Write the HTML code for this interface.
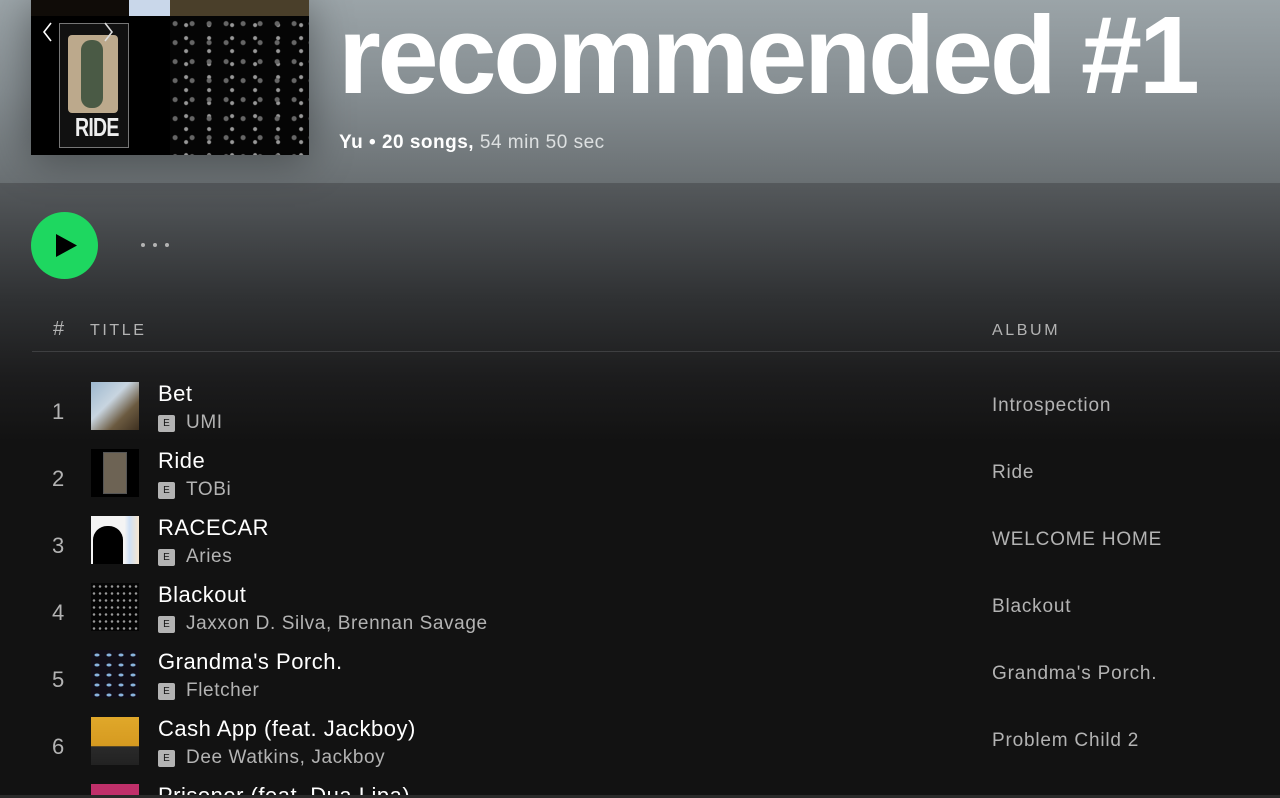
<!DOCTYPE html>
<html style="width:1280px;height:798px;overflow:hidden"><head><meta charset="utf-8"><style>
*{margin:0;padding:0;box-sizing:border-box}
body{width:1280px;height:798px;overflow:hidden;background:#121212;font-family:"Liberation Sans",sans-serif;position:relative}
.hdr{position:absolute;left:0;top:0;width:1280px;height:183px;background:linear-gradient(180deg,#9ba4a8 0%,#858d91 50%,#6a7073 100%)}
.grad{position:absolute;left:0;top:183px;width:1280px;height:260px;background:linear-gradient(180deg,#55595c 0%,#2f3133 45%,#1c1c1d 75%,#121212 100%)}
.art{position:absolute;left:31px;top:0;width:278px;height:155px;background:#000;overflow:hidden;box-shadow:0 4px 40px rgba(0,0,0,.4)}
.t{position:absolute;left:338px;top:-8px;font-size:110px;font-weight:bold;color:#fff;letter-spacing:-3.3px;white-space:nowrap}
.meta{position:absolute;left:339px;top:132px;font-size:19px;color:#fff;font-weight:bold;letter-spacing:.5px}
.meta span{color:#dde0e1;font-weight:normal}
.play{position:absolute;left:31px;top:212px;width:67px;height:67px;border-radius:50%;background:#1ed760}
.dots{position:absolute;left:141px;top:243px}
.dots i{display:inline-block;width:4px;height:4px;border-radius:50%;background:#b3b3b3;margin-right:8px;vertical-align:top}
.th{position:absolute;top:322px;font-size:16px;letter-spacing:2.6px;color:#b3b3b3}
.line{position:absolute;left:32px;top:351px;width:1248px;height:1px;background:#3e3f41}
.row{position:absolute;left:0;width:1280px;height:67px}
.n{position:absolute;left:52px;top:17px;font-size:22px;color:#b3b3b3}
.th2{position:absolute;left:91px;top:0;width:48px;height:48px;overflow:hidden}
.nm{position:absolute;left:158px;top:-1px;font-size:22px;color:#fff;white-space:nowrap;letter-spacing:.5px}
.ar{position:absolute;left:158px;top:30px;font-size:19px;color:#b3b3b3;white-space:nowrap;letter-spacing:.6px}
.e{display:inline-block;width:17px;height:17px;background:#b3b3b3;color:#121212;font-size:10px;text-align:center;line-height:17px;border-radius:2px;margin-right:11px;vertical-align:2px;letter-spacing:0}
.al{position:absolute;left:992px;top:13px;font-size:19px;color:#b3b3b3;white-space:nowrap;letter-spacing:.8px}
</style></head><body>
<div class="hdr"></div><div class="grad"></div>
<div class="art">
<div style="position:absolute;left:0;top:0;width:100px;height:16px;background:#100c08"></div>
<div style="position:absolute;left:98px;top:0;width:41px;height:16px;background:#c9d7ea"></div>
<div style="position:absolute;left:139px;top:0;width:139px;height:16px;background:#4a3f2a"></div>
<div style="position:absolute;left:28px;top:23px;width:70px;height:125px;border:1px solid #777;background:#111"></div>
<div style="position:absolute;left:37px;top:35px;width:50px;height:78px;background:#bca98c;border-radius:4px"></div>
<div style="position:absolute;left:50px;top:40px;width:22px;height:68px;background:#4a5a45;border-radius:10px"></div>
<div style="position:absolute;left:44px;top:112px;font-size:26px;font-weight:bold;color:#eee;letter-spacing:-1px;transform:scaleX(.75);transform-origin:left">RIDE</div>
<div style="position:absolute;left:139px;top:16px;width:139px;height:139px;background:radial-gradient(circle at 30% 40%,#666 0 2px,transparent 3px) 0 0/17px 19px,radial-gradient(circle at 70% 70%,#999 0 1.5px,transparent 2.5px) 0 0/23px 13px,#050505"></div>
<svg style="position:absolute;left:10px;top:20px" width="80" height="24"><path d="M10 3 L3 12 L10 21" stroke="#fff" stroke-width="1.6" fill="none"/><path d="M64 3 L71 12 L64 21" stroke="#ddd" stroke-width="1.6" fill="none"/></svg>
</div>
<div class="t">recommended #1</div>
<div class="meta">Yu • 20 songs, <span>54 min 50 sec</span></div>
<div class="play"><svg width="67" height="67"><path d="M25 22 L46 33.5 L25 45 Z" fill="#000"/></svg></div>
<div class="dots"><i></i><i></i><i></i></div>
<div class="th" style="left:53px;font-size:20px;top:318px">#</div>
<div class="th" style="left:90px">TITLE</div>
<div class="th" style="left:992px">ALBUM</div>
<div class="line"></div>

<div class="row" style="top:382px"><div class="n">1</div><div class="th2" style="background:linear-gradient(135deg,#9db8cf 0%,#c8d5e0 40%,#6b5a40 70%,#3e3020 100%)"></div><div class="nm">Bet</div><div class="ar"><span class="e">E</span>UMI</div><div class="al">Introspection</div></div>
<div class="row" style="top:449px"><div class="n">2</div><div class="th2" style="background:#000"><div style="position:absolute;left:12px;top:3px;width:24px;height:42px;border:1px solid #555;background:#6d6354"></div></div><div class="nm">Ride</div><div class="ar"><span class="e">E</span>TOBi</div><div class="al">Ride</div></div>
<div class="row" style="top:516px"><div class="n">3</div><div class="th2" style="background:linear-gradient(90deg,#f4f4f4 70%,#cfe0f5 80%,#f7e6d0)"><div style="position:absolute;left:2px;top:10px;width:30px;height:38px;background:#000;border-radius:14px 14px 0 0"></div></div><div class="nm">RACECAR</div><div class="ar"><span class="e">E</span>Aries</div><div class="al">WELCOME HOME</div></div>
<div class="row" style="top:583px"><div class="n">4</div><div class="th2" style="background:radial-gradient(circle,#999 0 1px,transparent 1.5px) 0 0/6px 7px,#050505"></div><div class="nm">Blackout</div><div class="ar"><span class="e">E</span>Jaxxon D. Silva, Brennan Savage</div><div class="al">Blackout</div></div>
<div class="row" style="top:650px"><div class="n">5</div><div class="th2" style="background:radial-gradient(ellipse 5px 3px,#8ab4e0 0 2px,transparent 3px) 0 0/12px 10px,#120e18"></div><div class="nm">Grandma's Porch.</div><div class="ar"><span class="e">E</span>Fletcher</div><div class="al">Grandma's Porch.</div></div>
<div class="row" style="top:717px"><div class="n">6</div><div class="th2" style="background:linear-gradient(180deg,#e0a82a 0%,#d69a20 60%,#2a2a2a 62%,#222 100%)"></div><div class="nm">Cash App (feat. Jackboy)</div><div class="ar"><span class="e">E</span>Dee Watkins, Jackboy</div><div class="al">Problem Child 2</div></div>
<div class="row" style="top:784px;height:11px;overflow:hidden"><div class="th2" style="background:#c0306a"></div><div class="nm">Prisoner (feat. Dua Lipa)</div></div>
<div style="position:absolute;left:0;top:795px;width:1280px;height:3px;background:#2a2a2a"></div>
</body></html>
